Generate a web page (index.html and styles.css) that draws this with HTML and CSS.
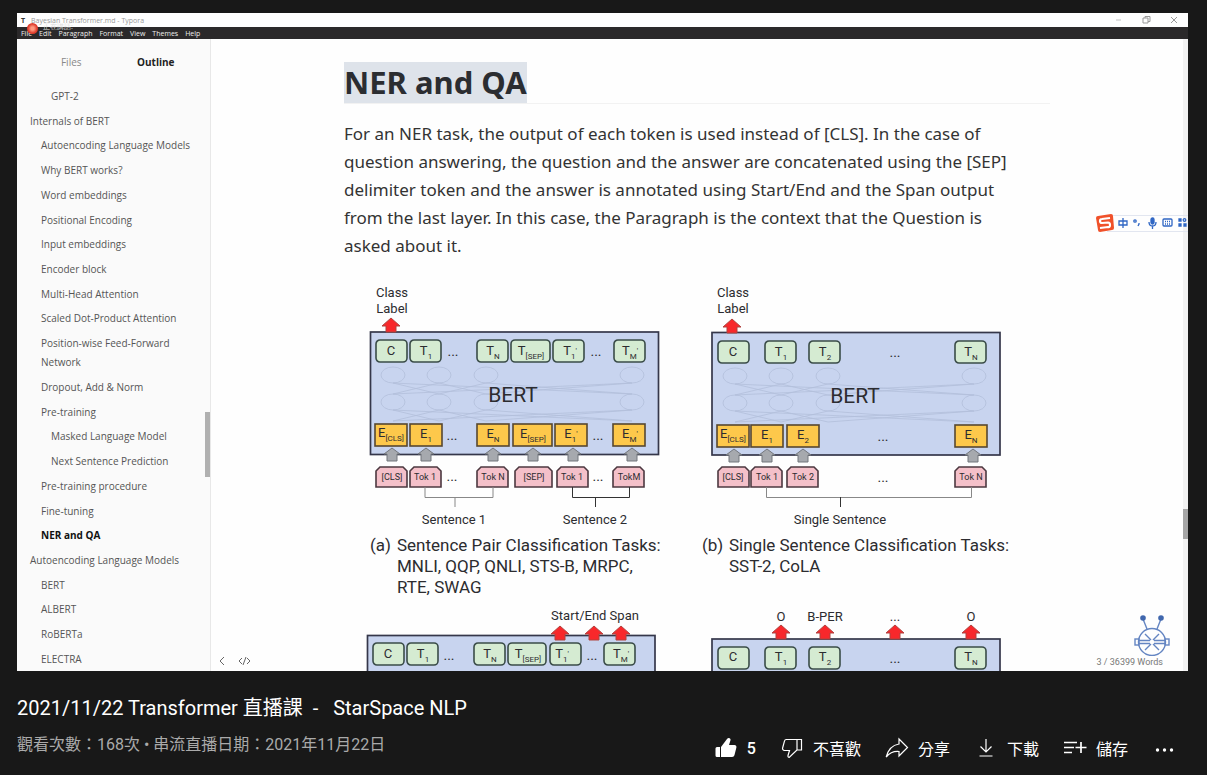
FILE: index.html
```
<!DOCTYPE html>
<html lang="zh-Hant">
<head>
<meta charset="utf-8">
<title>2021/11/22 Transformer 直播課 - StarSpace NLP</title>
<link rel="stylesheet" href="styles.css">
</head>
<body>
<main class="player">
  <header class="titlebar">
    <b class="app-mark">T</b><span>Bayesian Transformer.md - Typora</span>
    <svg class="win-controls" width="64" height="12" viewBox="0 0 64 12"><path d="M2 6h5" opacity=".6"/><path d="M29 4h5v5h-5zM31 4V2.500h5V7.500h-2M57 3l6 6M63 3l-6 6"/></svg>
  </header>
  <nav class="menubar">
    <span>File</span><span>Edit</span><span>Paragraph</span><span>Format</span><span>View</span><span>Themes</span><span>Help</span>
    <i class="rec-dot"></i><small class="rec-label">正在講話:</small>
  </nav>
  <div class="workspace">
    <aside class="sidebar">
      <div class="tabs"><button>Files</button><button class="active">Outline</button></div>
      <ul class="outline">
        <li class="l3">GPT-2</li>
        <li>Internals of BERT</li>
        <li class="l2">Autoencoding Language Models</li>
        <li class="l2">Why BERT works?</li>
        <li class="l2">Word embeddings</li>
        <li class="l2">Positional Encoding</li>
        <li class="l2">Input embeddings</li>
        <li class="l2">Encoder block</li>
        <li class="l2">Multi-Head Attention</li>
        <li class="l2">Scaled Dot-Product Attention</li>
        <li class="l2">Position-wise Feed-Forward Network</li>
        <li class="l2">Dropout, Add &amp; Norm</li>
        <li class="l2">Pre-training</li>
        <li class="l3">Masked Language Model</li>
        <li class="l3">Next Sentence Prediction</li>
        <li class="l2">Pre-training procedure</li>
        <li class="l2">Fine-tuning</li>
        <li class="l2 current">NER and QA</li>
        <li>Autoencoding Language Models</li>
        <li class="l2">BERT</li>
        <li class="l2">ALBERT</li>
        <li class="l2">RoBERTa</li>
        <li class="l2">ELECTRA</li>
      </ul>
      <i class="side-thumb"></i>
    </aside>
    <section class="document">
      <article class="page">
        <h1><mark>NER and QA</mark></h1>
        <p>For an NER task, the output of each token is used instead of [CLS]. In the case of question answering, the question and the answer are concatenated using the [SEP] delimiter token and the answer is annotated using Start/End and the Span output from the last layer. In this case, the Paragraph is the context that the Question is asked about it.</p>
        <svg class="figure" viewBox="344 280 706 391" preserveAspectRatio="xMinYMin slice">
          <defs>
            <path id="up" d="M0 0L9 8H5V14H-5V8H-9Z"/>
            <path id="up-grey" d="M0 0L8 6H5V13H-5V6H-8Z"/>
            <path id="tok" d="M0 20V4L4 0H27L31 4V20Z"/>
            <rect id="out" width="31" height="22" rx="4"/>
            <rect id="emb" width="32" height="22"/>
            <g id="web">
              <ellipse cx="23" cy="43" rx="12" ry="8"/><ellipse cx="69" cy="43" rx="12" ry="8"/><ellipse cx="116" cy="43" rx="12" ry="8"/><ellipse cx="262" cy="43" rx="12" ry="8"/>
              <ellipse cx="23" cy="70" rx="12" ry="8"/><ellipse cx="69" cy="70" rx="12" ry="8"/><ellipse cx="116" cy="70" rx="12" ry="8"/><ellipse cx="262" cy="70" rx="12" ry="8"/>
              <path d="M23 51L69 62L116 51L262 62M23 62L69 51L116 62L262 51M23 51L262 62M23 62L262 51M23 78L69 89L116 78L262 89M23 89L69 78L116 89L262 78M23 78L262 89M23 89L262 78"/>
            </g>
          </defs>

          <!-- (a) sentence pair -->
          <rect class="model" x="370.500" y="332" width="288" height="122.500"/>
          <use class="web" href="#web" x="370" y="332"/>
          <g class="red"><use href="#up" x="391" y="318"/></g>
          <g class="out"><use href="#out" x="376" y="340"/><use href="#out" x="410" y="340"/><use href="#out" x="477" y="340"/><rect x="511" y="340" width="39" height="22" rx="4"/><use href="#out" x="553" y="340"/><use href="#out" x="614" y="340"/></g>
          <g class="emb"><use href="#emb" x="375" y="424"/><use href="#emb" x="410" y="424"/><use href="#emb" x="477" y="424"/><rect x="513" y="424" width="39" height="22"/><use href="#emb" x="555" y="424"/><use href="#emb" x="613" y="424"/></g>
          <g class="grey"><use href="#up-grey" x="392" y="448"/><use href="#up-grey" x="426" y="448"/><use href="#up-grey" x="493" y="448"/><use href="#up-grey" x="533" y="448"/><use href="#up-grey" x="573" y="448"/><use href="#up-grey" x="632" y="448"/></g>
          <g class="tok"><use href="#tok" x="376" y="467"/><use href="#tok" x="410" y="467"/><use href="#tok" x="477" y="467"/><path d="M515 487V471L519 467H548L552 471V487Z"/><use href="#tok" x="557" y="467"/><use href="#tok" x="613" y="467"/></g>
          <path class="brace" d="M425 487V497.500H493V487M455 497V507"/><path class="brace dark" d="M572.500 487V497.500H629.500V487M595.500 497V507"/>
          <g class="t label"><text x="392" y="297">Class</text><text x="392" y="313">Label</text><text x="454" y="524">Sentence 1</text><text x="595" y="524">Sentence 2</text></g>
          <text class="t bert" x="513" y="402">BERT</text>
          <g class="t cell">
            <text x="391" y="355">C</text><text x="426" y="355">T<tspan dy="4">1</tspan></text><text x="493" y="355">T<tspan dy="4">N</tspan></text><text x="531" y="355">T<tspan dy="4">[SEP]</tspan></text><text x="570" y="355">T<tspan dy="4">1</tspan><tspan dy="-6">'</tspan></text><text x="630" y="355">T<tspan dy="4">M</tspan><tspan dy="-6">'</tspan></text>
            <text x="391" y="437">E<tspan dy="4">[CLS]</tspan></text><text x="426" y="438">E<tspan dy="4">1</tspan></text><text x="493" y="438">E<tspan dy="4">N</tspan></text><text x="533" y="438">E<tspan dy="4">[SEP]</tspan></text><text x="571" y="438">E<tspan dy="4">1</tspan><tspan dy="-6">'</tspan></text><text x="630" y="438">E<tspan dy="4">M</tspan><tspan dy="-6">'</tspan></text>
          </g>
          <g class="t dots"><text x="453" y="356">...</text><text x="596" y="356">...</text><text x="452" y="440">...</text><text x="598" y="440">...</text><text x="452" y="481">...</text><text x="598" y="481">...</text></g>
          <g class="t small"><text x="392" y="480">[CLS]</text><text x="425" y="480">Tok 1</text><text x="493" y="480">Tok N</text><text x="534" y="480">[SEP]</text><text x="572" y="480">Tok 1</text><text x="629" y="480">TokM</text></g>
          <g class="t caption"><text x="370" y="551">(a)</text><text x="397" y="551">Sentence Pair Classification Tasks:</text><text x="397" y="572">MNLI, QQP, QNLI, STS-B, MRPC,</text><text x="397" y="593">RTE, SWAG</text></g>

          <!-- (b) single sentence -->
          <rect class="model" x="712" y="332.500" width="288" height="122.500"/>
          <use class="web" href="#web" x="712" y="333"/>
          <g class="red"><use href="#up" x="732" y="319"/></g>
          <g class="out"><use href="#out" x="718" y="341"/><use href="#out" x="765" y="341"/><use href="#out" x="809" y="341"/><use href="#out" x="955" y="341"/></g>
          <g class="emb"><use href="#emb" x="717" y="425"/><use href="#emb" x="751" y="425"/><use href="#emb" x="787" y="425"/><use href="#emb" x="955" y="425"/></g>
          <g class="grey"><use href="#up-grey" x="734" y="449"/><use href="#up-grey" x="767" y="449"/><use href="#up-grey" x="803" y="449"/><use href="#up-grey" x="973" y="449"/></g>
          <g class="tok"><use href="#tok" x="718" y="467"/><use href="#tok" x="751" y="467"/><use href="#tok" x="787" y="467"/><use href="#tok" x="955" y="467"/></g>
          <path class="brace" d="M766.500 487V497.500H971.500V487"/><path class="brace dark" d="M840.500 497V507"/>
          <g class="t label"><text x="733" y="297">Class</text><text x="733" y="313">Label</text><text x="840" y="524">Single Sentence</text></g>
          <text class="t bert" x="855" y="403">BERT</text>
          <g class="t cell">
            <text x="733" y="356">C</text><text x="781" y="356">T<tspan dy="4">1</tspan></text><text x="825" y="356">T<tspan dy="4">2</tspan></text><text x="971" y="356">T<tspan dy="4">N</tspan></text>
            <text x="733" y="438">E<tspan dy="4">[CLS]</tspan></text><text x="767" y="439">E<tspan dy="4">1</tspan></text><text x="803" y="439">E<tspan dy="4">2</tspan></text><text x="971" y="439">E<tspan dy="4">N</tspan></text>
          </g>
          <g class="t dots"><text x="895" y="357">...</text><text x="883" y="441">...</text><text x="883" y="482">...</text></g>
          <g class="t small"><text x="733" y="480">[CLS]</text><text x="767" y="480">Tok 1</text><text x="803" y="480">Tok 2</text><text x="971" y="480">Tok N</text></g>
          <g class="t caption"><text x="702" y="551">(b)</text><text x="729" y="551">Single Sentence Classification Tasks:</text><text x="729" y="572">SST-2, CoLA</text></g>

          <!-- (c) span answers -->
          <rect class="model" x="367.500" y="635.500" width="287.500" height="60"/>
          <g class="red"><use href="#up" x="560" y="626"/><use href="#up" x="594" y="626"/><use href="#up" x="621" y="626"/></g>
          <g class="out"><use href="#out" x="373" y="643"/><use href="#out" x="407" y="643"/><use href="#out" x="474" y="643"/><rect x="508" y="643" width="38" height="22" rx="4"/><use href="#out" x="550" y="643"/><use href="#out" x="604" y="643"/></g>
          <g class="t label"><text x="595" y="620">Start/End Span</text></g>
          <g class="t cell"><text x="388" y="658">C</text><text x="423" y="658">T<tspan dy="4">1</tspan></text><text x="490" y="658">T<tspan dy="4">N</tspan></text><text x="528" y="658">T<tspan dy="4">[SEP]</tspan></text><text x="562" y="658">T<tspan dy="4">1</tspan><tspan dy="-6">'</tspan></text><text x="621" y="658">T<tspan dy="4">M</tspan><tspan dy="-6">'</tspan></text></g>
          <g class="t dots"><text x="449" y="660">...</text><text x="592" y="660">...</text></g>

          <!-- (d) tagging -->
          <rect class="model" x="712" y="639" width="288" height="60"/>
          <g class="red"><use href="#up" x="781" y="625"/><use href="#up" x="825" y="625"/><use href="#up" x="895" y="625"/><use href="#up" x="971" y="625"/></g>
          <g class="out"><use href="#out" x="718" y="647"/><use href="#out" x="765" y="647"/><use href="#out" x="809" y="647"/><use href="#out" x="955" y="647"/></g>
          <g class="t label"><text x="781" y="621">O</text><text x="825" y="621">B-PER</text><text x="895" y="621">...</text><text x="971" y="621">O</text></g>
          <g class="t cell"><text x="733" y="661">C</text><text x="781" y="661">T<tspan dy="4">1</tspan></text><text x="825" y="661">T<tspan dy="4">2</tspan></text><text x="971" y="661">T<tspan dy="4">N</tspan></text></g>
          <g class="t dots"><text x="895" y="663">...</text></g>
        </svg>
      </article>
      <i class="scroll-track"><i class="scroll-thumb"></i></i>
      <svg class="status-icons" width="32" height="10" viewBox="0 0 32 10"><path d="M5 1L1 5L5 9M23 2L20 5L23 8M28 2L31 5L28 8M27 1L24 9"/></svg>
      <div class="ime">
        <svg width="20" height="20" viewBox="0 0 20 20"><path d="M3 3L16 1Q18 1 18 3L19 15Q19 17 17 17L5 19Q3 19 3 17L1 5Q1 3 3 3Z" fill="#f0512a"/><path d="M15 5L7 6Q5 6 5 8T7 10L13 9.500Q15 9.500 15 12T13 14L5 15" fill="none" stroke="#fff" stroke-width="2.200"/></svg>
        <svg width="70" height="12" viewBox="0 0 70 12" fill="none" stroke="#2f66c4" stroke-width="1.300"><path d="M1 4h8v4H1zM5 1v10"/><circle cx="17" cy="4" r="1.200"/><path d="M21 6v1l-1 2"/><rect x="33" y="1" width="3" height="6" rx="1.500" fill="#2f66c4"/><path d="M31 5q0 4 3.500 4T38 5M34.500 9v3"/><rect x="45" y="2" width="9" height="7" rx="1"/><path d="M47 4.500h5M47 7h5" stroke-dasharray="1 1"/><path d="M61 2h2v2h-2zM61 7h2v2h-2zM66 7h2v2h-2z" fill="#2f66c4"/><circle cx="66.500" cy="3" r="1.300"/></svg>
      </div>
      <svg class="robot" width="36" height="42" viewBox="0 0 36 42"><g fill="none" stroke="#6485c2" stroke-width="1.400"><circle cx="18" cy="28" r="13.500"/><path d="M13 15L9 5M23 15L27 5M5 26.500H16M20 26.500H31M5 29.500H16M20 29.500H31M11 20L17 26M25 20L19 26M11 36L17 30M25 36L19 30"/><rect x="1" y="25" width="4" height="6"/><rect x="31" y="25" width="4" height="6"/></g><circle cx="9" cy="4" r="2.800" fill="#4067ad"/><circle cx="27" cy="4" r="2.800" fill="#4067ad"/></svg>
      <span class="words">3 / 36399 Words</span>
    </section>
  </div>
</main>
<footer class="info">
  <h2>2021/11/22 Transformer 直播課 &nbsp;-&nbsp;&nbsp; StarSpace NLP</h2>
  <div class="row">
    <p class="meta">觀看次數：168次 • 串流直播日期：2021年11月22日</p>
    <div class="actions">
      <button class="count"><svg viewBox="0 0 24 24"><path fill="#fff" d="M3 11h3v10H3a1.500 1.500 0 0 1-1.500-1.500v-7A1.500 1.500 0 0 1 3 11zM7 11l6-8c.5-.7 1-1 1.800-1 1.200 0 2 1 1.700 2.200L15 9h5.500c1.300 0 2.200 1.200 1.900 2.400l-1.900 7.600c-.3 1.200-1.200 2-2.400 2H7z"/></svg>5</button>
      <button><svg viewBox="0 0 24 24"><path class="line" d="M17 3.500H6.200c-.8 0-1.400.4-1.600 1.200L2.600 12c-.3 1.200.5 2.500 1.900 2.500H9.500L8 19.500c-.3 1.200.4 2 1.200 2L17 14V3.500zM17 3.500h4.500V14H17"/></svg>不喜歡</button>
      <button><svg viewBox="0 0 24 24"><path class="line" d="M14 3L22.500 11.500L14 20V15.500C8.500 15 4.500 17 1.200 21C3 14 7.500 9 14 8z"/></svg>分享</button>
      <button><svg viewBox="0 0 24 24"><path class="line" d="M12 3v13M6.500 10.500L12 16l5.500-5.500M5.500 20h13"/></svg>下載</button>
      <button><svg viewBox="0 0 24 24"><path class="line thick" d="M1 6.500h13M1 11.500h10M1 16.500h8M18 6v11M12.500 11.500h11"/></svg>儲存</button>
      <button aria-label="More"><svg viewBox="0 0 24 24" fill="#fff"><circle cx="5.500" cy="14" r="1.700"/><circle cx="12.500" cy="14" r="1.700"/><circle cx="19.500" cy="14" r="1.700"/></svg></button>
    </div>
  </div>
</footer>
</body>
</html>
```
FILE: styles.css
```
* { box-sizing: border-box; }
body { margin: 0; height: 100vh; display: flex; flex-direction: column; background: #181818; overflow: hidden; }
button { border: 0; padding: 0; background: none; font: inherit; color: inherit; }
h1, h2, p, ul { margin: 0; padding: 0; }

.player { flex: 1; min-height: 0; margin: 13px 19px 0 17px; display: flex; flex-direction: column; background: #fefefe; color: #333; font-family: "Open Sans", "Noto Sans", sans-serif; overflow: hidden; }
.titlebar { display: flex; align-items: center; height: 14px; padding: 0 10px 0 4px; gap: 6px; font-size: 7px; color: #999; }
.app-mark { color: #333; }
.win-controls { margin-left: auto; fill: none; stroke: #999; stroke-width: 1; }
.menubar { position: relative; display: flex; align-items: center; gap: 7px; height: 12px; padding: 0 4px; background: #2b292a; color: #eee; font-size: 7px; }
.rec-dot { position: absolute; left: 10px; top: -4px; width: 11px; height: 11px; border-radius: 50%; background: radial-gradient(#ff9a80 20%, #df3b2b 60%); }
.rec-label { position: absolute; left: 26px; top: -4px; font-size: 7px; line-height: 8px; color: #ddd; }

.workspace { flex: 1; min-height: 0; display: flex; }
.sidebar { position: relative; flex: none; width: 194px; display: flex; flex-direction: column; background: #fafafa; border-right: 1px solid #e8e8e8; font-size: 10px; }
.tabs { display: flex; padding: 13px 12px 0; line-height: 20px; color: #888; }
.tabs button { flex: 1; }
.tabs .active { color: #222; font-weight: 700; }
.outline { flex: 1; display: flex; flex-direction: column; justify-content: space-between; padding: 15px 14px 2px 13px; list-style: none; line-height: 19px; color: #555; }
.outline .l2 { padding-left: 11px; }
.outline .l3 { padding-left: 21px; }
.outline .current { color: #111; font-weight: 700; }
.side-thumb { position: absolute; right: 0; top: 373px; width: 5px; height: 65px; background: #b0b0b0; }

.document { position: relative; flex: 1; min-width: 0; padding-right: 5px; overflow: hidden; font-family: "Noto Sans", "Open Sans", sans-serif; }
.page { max-width: 706px; margin: 0 auto; padding-top: 23px; }
.page h1 { display: flex; border-bottom: 1px solid #f2f2f2; font-size: 31px; line-height: 41px; color: #2b2d31; }
.page mark { background: #dee3ea; color: inherit; }
.page p { padding: 16px 24px 0 0; font-size: 17px; line-height: 28px; }
.figure { display: block; width: 100%; margin-top: 20px; }
.scroll-track { position: absolute; right: 0; top: 0; width: 5px; height: 100%; background: #f2f2f2; }
.scroll-thumb { position: absolute; top: 470px; width: 5px; height: 30px; background: #a5a5a5; }
.status-icons { position: absolute; left: 8px; bottom: 5px; fill: none; stroke: #666; }
.ime { position: absolute; right: 0; top: 174px; display: flex; align-items: center; gap: 3px; height: 20px; background: linear-gradient(#e2e6f0, #e2e6f0) 12px 2px / 100% 1px no-repeat, linear-gradient(#e2e6f0, #e2e6f0) 12px 18px / 100% 1px no-repeat; }
.robot { position: absolute; right: 18px; bottom: 15px; }
.words { position: absolute; right: 25px; bottom: 3px; font-family: Roboto, sans-serif; font-size: 9px; line-height: 12px; color: #777; }

.model { fill: #c8d4ef; stroke: #35374a; stroke-width: 1.700; }
.web { fill: none; stroke: #b2bfda; stroke-width: .8; }
.red { fill: #f8282b; stroke: #b0433f; stroke-width: 1; }
.out { fill: #d5ebd2; stroke: #3a4c48; stroke-width: 1.600; }
.emb { fill: #fdc84b; stroke: #574730; stroke-width: 1.600; }
.tok { fill: #f4c0c9; stroke: #4c3840; stroke-width: 1.600; }
.grey { fill: #a6a9ae; stroke: #73777d; stroke-width: 1; }
.brace { fill: none; stroke: #888; }
.dark { stroke: #333; }
.t { fill: #2c2c30; font-family: Roboto, sans-serif; text-anchor: middle; }
.label { font-size: 13px; }
.bert { font-size: 21px; }
.cell { font-size: 13px; }
.cell tspan { font-size: 8px; }
.dots { font-size: 14px; }
.small { font-size: 9px; }
.caption { font-size: 17px; text-anchor: start; }

.info { padding: 25px 31px 6px 17px; color: #fff; font-family: Roboto, "Noto Sans CJK TC", sans-serif; }
.info h2 { font-size: 20px; font-weight: 400; line-height: 24px; }
.row { display: flex; justify-content: space-between; padding-top: 8px; }
.meta { padding-top: 5px; font-size: 16px; line-height: 24px; color: #aaa; }
.actions { display: flex; gap: 24px; height: 41px; padding-bottom: 1px; }
.actions button { display: flex; align-items: center; gap: 9px; font-size: 16px; }
.actions .count { font-weight: 500; }
.actions svg { width: 24px; height: 24px; }
.line { fill: none; stroke: #fff; stroke-width: 1.200; }
.thick { stroke-width: 1.700; }
```
